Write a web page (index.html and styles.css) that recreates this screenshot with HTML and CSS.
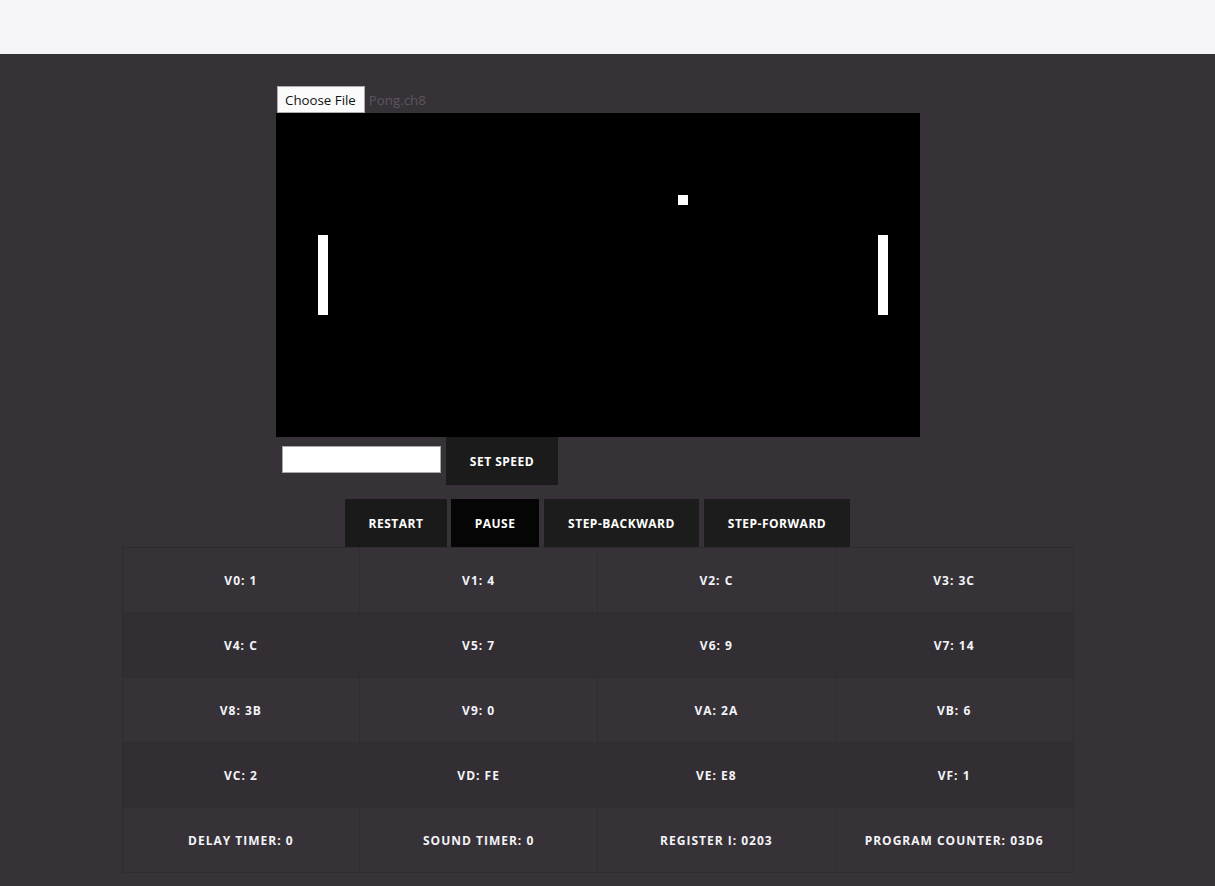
FILE: index.html
```html
<!DOCTYPE html>
<html>
<head>
<meta charset="utf-8">
<link rel="stylesheet" href="styles.css">
</head>
<body>
<header class="topbar"></header>
<main class="main">
  <div class="stage">
    <div class="file-row">
      <span class="file-btn">Choose File</span><span class="file-name">Pong.ch8</span>
    </div>
    <div class="screen">
      <svg width="640" height="320" viewBox="0 0 64 32" shape-rendering="crispEdges">
        <rect x="4" y="12" width="1" height="8" fill="#fff"/>
        <rect x="60" y="12" width="1" height="8" fill="#fff"/>
        <rect x="40" y="8" width="1" height="1" fill="#fff"/>
      </svg>
    </div>
    <div class="speed-row">
      <input class="speed-input" type="text">
      <button class="btn speed-btn">SET SPEED</button>
    </div>
  </div>
  <div class="controls">
    <button class="btn restart">RESTART</button>
    <button class="btn pause">PAUSE</button>
    <button class="btn back">STEP-BACKWARD</button>
    <button class="btn fwd">STEP-FORWARD</button>
  </div>
  <div class="regs">
    <div class="cell">V0: 1</div><div class="cell">V1: 4</div><div class="cell">V2: C</div><div class="cell">V3: 3C</div>
    <div class="cell alt">V4: C</div><div class="cell alt">V5: 7</div><div class="cell alt">V6: 9</div><div class="cell alt">V7: 14</div>
    <div class="cell">V8: 3B</div><div class="cell">V9: 0</div><div class="cell">VA: 2A</div><div class="cell">VB: 6</div>
    <div class="cell alt">VC: 2</div><div class="cell alt">VD: FE</div><div class="cell alt">VE: E8</div><div class="cell alt">VF: 1</div>
    <div class="cell">DELAY TIMER: 0</div><div class="cell">SOUND TIMER: 0</div><div class="cell">REGISTER I: 0203</div><div class="cell">PROGRAM COUNTER: 03D6</div>
  </div>
</main>
</body>
</html>
```
FILE: styles.css
```css
html, body {
  margin: 0;
  padding: 0;
  height: 100%;
}
body {
  background: #373238;
  font-family: "Open Sans", "Noto Sans", sans-serif;
  overflow: hidden;
}
.topbar {
  height: 54px;
  background: #f5f5f7;
}
.main {
  width: 1195px;
  padding-top: 32px;
  display: flex;
  flex-direction: column;
  align-items: center;
}
.stage {
  width: 644px;
  margin-left: 1px;
}
.file-row {
  display: flex;
  align-items: center;
  height: 27px;
}
.file-btn {
  box-sizing: border-box;
  height: 27px;
  margin-left: 1px;
  padding: 0 8px 0 7px;
  display: flex;
  align-items: center;
  background: #fbfbfb;
  border: 1px solid #adadad;
  color: #111;
  font-size: 13.3px;
}
.file-name {
  margin-left: 4px;
  color: #5b565c;
  font-size: 13.3px;
}
.screen {
  width: 640px;
  height: 320px;
  border: 2px solid #000;
  background: #000;
}
.screen svg {
  display: block;
}
.speed-row {
  display: flex;
  align-items: flex-start;
  gap: 5px;
}
.speed-input {
  box-sizing: border-box;
  width: 159px;
  height: 27px;
  margin: 9px 0 0 6px;
  border: 1px solid #a9a9a9;
  background: #fff;
  padding: 0;
}
.btn {
  border: none;
  background: #1b1b1b;
  color: #fff;
  font-family: "Open Sans", "Noto Sans", sans-serif;
  font-weight: 700;
  font-size: 12px;
  letter-spacing: 0.5px;
  height: 48px;
  padding: 0;
  cursor: pointer;
}
.speed-btn {
  width: 112px;
}
.controls {
  display: flex;
  margin-top: 14px;
}
.restart { width: 102px; background: #1a1a1a; }
.pause { width: 88px; background: #050505; margin-left: 4px; }
.back { width: 155px; background: #1c1c1c; margin-left: 5px; }
.fwd { width: 146px; background: #1c1c1c; margin-left: 5px; }
.regs {
  width: 951px;
  display: grid;
  grid-template-columns: repeat(4, 1fr);
  border-top: 1px solid #2f2b30;
  border-left: 1px solid #2f2b30;
}
.cell {
  height: 65px;
  display: flex;
  align-items: center;
  justify-content: center;
  background: #373238;
  border-right: 1px solid #302c31;
  border-bottom: 1px solid #302c31;
  box-sizing: border-box;
  color: #f2f4f7;
  font-weight: 700;
  font-size: 12px;
  letter-spacing: 1px;
}
.cell.alt {
  background: #322e34;
}
```
